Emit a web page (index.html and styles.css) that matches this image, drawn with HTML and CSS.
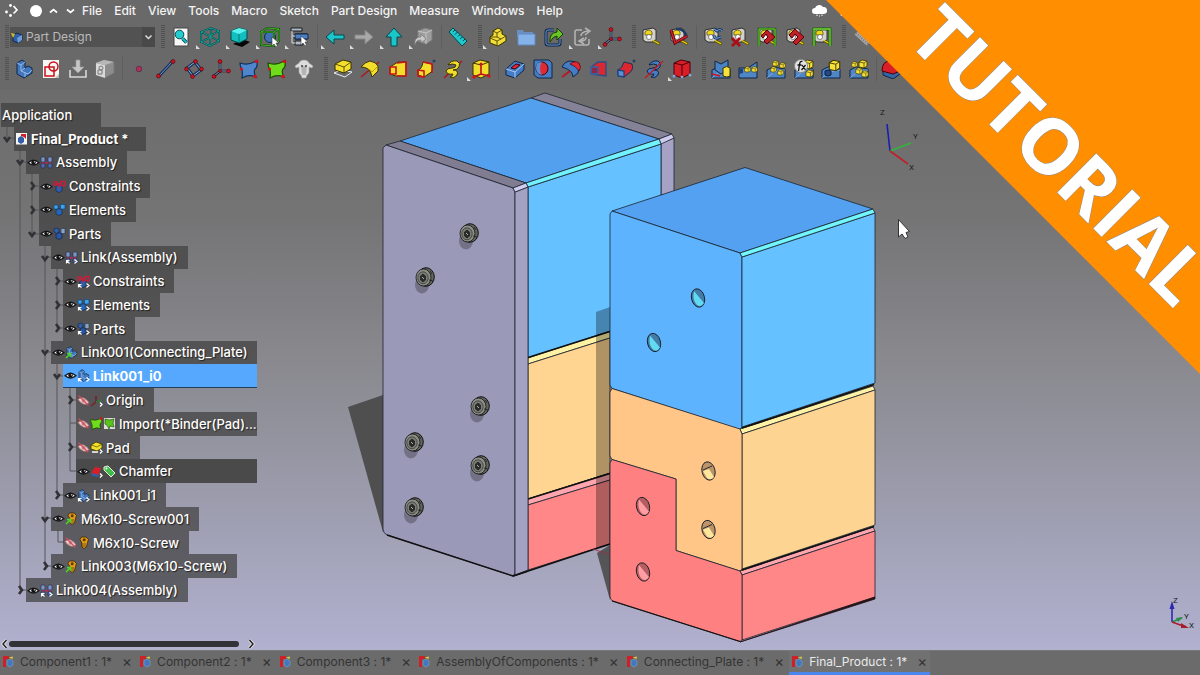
FILE: index.html
```html
<!DOCTYPE html>
<html lang="en">
<head>
<meta charset="utf-8">
<meta name="viewport" content="width=device-width, initial-scale=1">
<title>Final_Product</title>
<link rel="stylesheet" href="styles.css">
</head>
<body>
<svg class="defs" width="0" height="0" aria-hidden="true">
  <defs>
    <symbol id="eye" viewBox="0 0 12 12"><path d="M1 6.300Q6 1.500 11 6.300Q6 10.500 1 6.300z" fill="#fff" stroke="#16161a" stroke-width="1.200"/><circle cx="6" cy="6.100" r="2.100" fill="#111"/><circle cx="6.800" cy="5.400" r=".6" fill="#fff"/></symbol>
    <symbol id="eye-off" viewBox="0 0 12 12"><path d="M1 5Q6 1 11 8Q6 12 1 5z" fill="#f1d3d3" stroke="#b77" stroke-width=".8"/><circle cx="6" cy="6.300" r="1.800" fill="#b88"/><path d="M1.500 1.500l9 9" stroke="#d9485a" stroke-width="1.300"/></symbol>
    <symbol id="link" viewBox="0 0 13 13"><path d="M1.500 12.500v-3h3M1.500 9.500l3 3M9.500 8.500l2.500 2-2.500 2" fill="none" stroke="#fff" stroke-width="1.200"/></symbol>
    <symbol id="asm" viewBox="0 0 13 13"><g stroke="#1b2746" stroke-width=".6"><rect x="1" y="1" width="4" height="5" rx="1" fill="#7d92c8"/><rect x="8" y="1" width="4" height="5" rx="1" fill="#7d92c8"/><rect x="1" y="7.500" width="4" height="4.500" rx="1" fill="#4c69ab"/><rect x="8" y="7.500" width="4" height="4.500" rx="1" fill="#4c69ab"/></g><path d="M5 6.700h3M3 6v2M10 6v2" stroke="#b3265c" stroke-width="1.400"/></symbol>
    <symbol id="cons" viewBox="0 0 13 13"><path d="M3 6l3-1 3 1v5l-3 1.500-3-1.500z" fill="#2f5da8" stroke="#152a55" stroke-width=".7"/><path d="M1 2h3v3H1zM8 1.500h4v4H8zM4 3.500h4M6 3.500v4" fill="none" stroke="#c2203d" stroke-width="1.500"/></symbol>
    <symbol id="elem" viewBox="0 0 13 13"><path d="M1 2h4v4H1zM7.500 1.500H12V6H7.500z" fill="#3da2ee" stroke="#13467d" stroke-width=".7"/><path d="M3 7l3-1.500L9 7v4l-3 1.500L3 11z" fill="#2666b4" stroke="#12305c" stroke-width=".7"/></symbol>
    <symbol id="parts" viewBox="0 0 13 13"><path d="M1 2l2.500-1L6 2v3L3.500 6.500 1 5z" fill="#315fa8" stroke="#14284f" stroke-width=".7"/><path d="M8 1.500h4v5H8z" fill="#89a4c2" stroke="#2c405c" stroke-width=".7"/><path d="M3 7l3-1.500L9 7v4l-3 1.500L3 11z" fill="#2a55a0" stroke="#12244c" stroke-width=".7"/></symbol>
    <symbol id="body" viewBox="0 0 20 20"><path d="M3 4l5-3 3 2v6l3-2 4 2v5l-8 5-7-4z" fill="#4277bc" stroke="#0f2648"/><path d="M3 4l4 2 4-3M7 6v6l7 3 4-4M7 12l4-3M11 18v-4" fill="none" stroke="#9dc1ec" stroke-width=".9"/></symbol>
    <symbol id="screw" viewBox="0 0 13 13"><path d="M4.500 1h4.500l2.500 2.500-1 3L9.500 11 7 12.500 5 11l-.5-5L3 3.500z" fill="#e09a1c" stroke="#3d2700" stroke-width=".8"/><circle cx="7.200" cy="3.700" r="1.500" fill="#5b3b00"/><path d="M5 8h4M5 10h4" stroke="#6a4600" stroke-width=".8"/></symbol>
    <symbol id="green-arrow" viewBox="0 0 13 13"><path d="M1 12l4-4M2 7.500H5.500V11" fill="none" stroke="#4fd52a" stroke-width="1.600"/></symbol>
    <symbol id="appico" viewBox="0 0 13 13"><path d="M1 1h6v3H4v8H1z" fill="#cf2027"/><path d="M5 6l3-2 3 2v4l-3 2-3-2z" fill="#4277bd" stroke="#7fa2cf" stroke-width=".6"/><path d="M7 2.500l4-1-.5 2.500z" fill="#d8d436"/></symbol>
    <symbol id="tape" viewBox="0 0 20 20"><path d="M2 3l10-2 3 2v10l-3 2H5l-3-2z" fill="#d2d2ca" stroke="#2e2e2e"/><path d="M4 5q4-4 7 0v3H4z" fill="#efd71c" stroke="#4a4200" stroke-width=".7"/><circle cx="8" cy="10" r="2.500" fill="#fff" stroke="#555" stroke-width=".7"/><path d="M11 14l7 4 1-2-6-3" fill="#e6ce10" stroke="#514800" stroke-width=".8"/></symbol>
    <symbol id="boxes" viewBox="0 0 20 20"><path d="M1 11l6-3 12 2v9H1z" fill="#4f86c6" stroke="#0f2547"/><path d="M1 19l7-6 11-2" fill="none" stroke="#86b1e6" stroke-width=".8"/></symbol>
    <symbol id="cube" viewBox="0 0 10 10"><path d="M1 3l3-2 5 1v5L6 9 1 8z" fill="#f6e23a" stroke="#3b3400" stroke-width=".8"/><path d="M1 3l5 1 3-2M6 4v5" fill="none" stroke="#3b3400" stroke-width=".7"/></symbol>
    <symbol id="axes" viewBox="0 0 20 20"><path d="M9 12V3M9 12h8M9 12l-6 5" stroke="#111c33" stroke-width="2.400"/><path d="M9 12V3M9 12h8M9 12l-6 5" stroke="#9dadc3" stroke-width=".9"/><g fill="#d3121d" stroke="#46000a" stroke-width=".6"><circle cx="9" cy="2.500" r="1.900"/><circle cx="17.500" cy="12" r="1.900"/><circle cx="3" cy="17.500" r="1.900"/><circle cx="9" cy="12" r="1.500"/></g></symbol>
    <symbol id="surface" viewBox="0 0 20 20"><path d="M1 4Q9 7 18 1.500Q19 8 16 10Q14 13 17 18Q10 15 3 19Q4 13 2.500 10Q1 7 1 4z" stroke-width="1.200"/></symbol>
    <symbol id="screwhead" viewBox="0 0 24 32"><ellipse cx="9" cy="20" rx="7" ry="8.500" fill="#737186"/><ellipse cx="13" cy="12" rx="8.300" ry="9.300" fill="#62645e" stroke="#111"/><ellipse cx="10.500" cy="12.500" rx="7.500" ry="8.500" fill="#8d8f87" stroke="#111" stroke-width=".8"/><ellipse cx="10" cy="12.800" rx="5.200" ry="6" fill="#7b7e76" stroke="#2c2c2c" stroke-width=".7"/><path d="M7.500 11l2.500-2 2.500 2v4L10 17l-2.500-2z" fill="#2a2c2b" stroke="#111" stroke-width=".6"/><path d="M9 12l2 2" stroke="#adb0a7"/><path d="M16 15l4 1M17 6l2 3" stroke="#111" stroke-width=".7"/></symbol>
  </defs>
</svg>

<div class="app">
  <header class="chrome">
    <nav class="menubar" aria-label="Main menu">
      <svg class="menu-glyphs" viewBox="0 0 82 22" aria-hidden="true"><g fill="#fff"><circle cx="6.500" cy="12" r="1.400"/><circle cx="10.500" cy="15.500" r="1.400"/><circle cx="10.500" cy="5.500" r="1.400"/><circle cx="36" cy="11" r="6"/></g><path d="M13.500 6l3.500 4-3.500 3.500M50 12.500l3.500-3 3.500 3M67 9.500l3.500 3 3.500-3" fill="none" stroke="#fff" stroke-width="1.700"/></svg>
      <button>File</button><button>Edit</button><button>View</button><button>Tools</button><button>Macro</button><button>Sketch</button><button>Part Design</button><button>Measure</button><button>Windows</button><button>Help</button>
      <svg class="cloud" viewBox="0 0 36 22" aria-hidden="true"><path d="M4 14a3 3 0 0 1 0-6 4.500 4.500 0 0 1 8-1 3.500 3.500 0 0 1 1 7z" fill="#fff"/><path d="M6 14.500v1.500M8.500 15.500v1M11 14.500v1.500" stroke="#fff"/><path d="M29 13l3-1 3 4h-5z" fill="#fff"/></svg>
    </nav>

    <div class="toolbar" role="toolbar" aria-label="Views">
      <span class="handle"></span>
      <div class="workbench">
        <svg viewBox="0 0 13 13" aria-hidden="true"><path d="M3 4l4-2 5 2v5l-4 3-5-2z" fill="#315fa8" stroke="#132848"/><path d="M7 7l5-3v5l-4 3z" fill="#6f9fd8"/><path d="M1 2l4 1-2 4z" fill="#d0bf2b"/></svg>
        <select aria-label="Workbench"><option>Part Design</option></select>
        <svg class="caret" viewBox="0 0 13 20" aria-hidden="true"><path d="M3.500 8.500l3 3 3-3" fill="none" stroke="#ddd" stroke-width="1.500"/></svg>
      </div>
      <span class="handle gap"></span>
      <div class="group w148">
        <button aria-label="Fit all"><svg viewBox="0 0 20 20"><path d="M3 1h14v18H3z" fill="#f7f7f7" stroke="#444"/><path d="M11.500 11.500l4 4" stroke="#053f46" stroke-width="3.500"/><path d="M11.500 11.500l4 4" stroke="#14bfc4" stroke-width="2"/><circle cx="8.500" cy="7.500" r="4.300" fill="#23cdd0" stroke="#05494f"/></svg></button>
        <button class="more" aria-label="Isometric view"><svg viewBox="0 0 20 20" fill="none" stroke="#053c3e" stroke-width="1.800"><path d="M1 5l10-4 8 3v10l-9 5-9-4zM1 5l9 4 9-5M10 9v10M1 15l10-5 8 4M11 1v9"/><path d="M1 5l10-4 8 3v10l-9 5-9-4zM1 5l9 4 9-5M10 9v10M1 15l10-5 8 4M11 1v9" stroke="#16b7ad" stroke-width=".8"/></svg></button>
        <button class="more" aria-label="Draw style"><svg viewBox="0 0 20 20"><path d="M3 17l9-5 8 3-8 5z" fill="#050505"/><path d="M1 4l8-3 8 2v9l-8 4-8-3z" fill="#12bfc0" stroke="#04484a"/><path d="M1 4l8 3 8-4-8-2z" fill="#58f2ee"/><path d="M9 7v9" stroke="#087b7d"/></svg></button>
        <button class="more" aria-label="Bounding box"><svg viewBox="0 0 20 20"><circle cx="10" cy="10" r="5.500" fill="#3f70b4" stroke="#0e2a52"/><path d="M1 5l6-4 12 1v12l-5 5-13-1zM1 5h13l5-3M14 5v14" fill="none" stroke="#0b4b08" stroke-width="2"/><path d="M1 5l6-4 12 1v12l-5 5-13-1zM1 5h13l5-3M14 5v14" fill="none" stroke="#4fc92e" stroke-width=".8"/><path d="M12 10v9l2-2 2 3 1.500-1-1.500-3h3z" fill="#fff" stroke="#333" stroke-width=".6"/></svg></button>
        <button class="more" aria-label="Selection"><svg viewBox="0 0 20 20"><path d="M2 1h11v3H2zM6 7h12v5H6zM6 14h8v4H6z" fill="#aebacb" stroke="#111" stroke-width=".9"/><path d="M6 7h13v5H6z" fill="#4a80c4" stroke="#10264a"/><path d="M3 4v12h3M3 9h3" fill="none" stroke="#ddd"/><path d="M12 9v9l2-2 2 3 1.500-1-1.500-3h3z" fill="#fff" stroke="#333" stroke-width=".6"/></svg></button>
      </div>
      <span class="divider"></span>
      <div class="group w118">
        <button class="more" aria-label="Back"><svg viewBox="0 0 20 20"><path d="M1 10l8-7v5h10v4H9v5z" fill="#1bc6cb" stroke="#04484c"/></svg></button>
        <button class="more" aria-label="Forward"><svg viewBox="0 0 20 20"><path d="M19 10l-8-7v5H1v4h10v5z" fill="#a8a8a8" stroke="#858585"/></svg></button>
        <button class="more" aria-label="Up"><svg viewBox="0 0 20 20"><path d="M10 1l8 9h-5v9H7v-9H2z" fill="#1bc6cb" stroke="#04484c"/></svg></button>
        <button class="more" aria-label="Link actions"><svg viewBox="0 0 20 20"><path d="M5 4l7-3 7 2v10l-6 4-8-3z" fill="#9e9e9e" stroke="#7d7d7d"/><path d="M5 4l8 2 6-3M13 6v11" fill="none" stroke="#c4c4c4"/><path d="M2 18c-1-6 2-8 6-8V7l5 5-5 4v-3c-3 0-5 1-6 5z" fill="#c9c9c9" stroke="#777" stroke-width=".7"/></svg></button>
      </div>
      <span class="divider"></span>
      <div class="group w28">
        <button aria-label="Measure"><svg viewBox="0 0 20 20"><path d="M5 1l14 13-5 5L1 5z" fill="#1dc7cc" stroke="#04484c"/><path d="M7 3L5 5M9.500 5L7 7.500M12 7.500L10 9.500M14.500 10L12 12M17 12l-2 2" stroke="#04484c"/></svg></button>
      </div>
      <span class="handle gap"></span>
      <div class="group w143">
        <button class="more" aria-label="Create part"><svg viewBox="0 0 20 20"><path d="M3 10l3-2V4l5-3 4 2v4l4 2v5l-8 5-8-3z" fill="#f1dc38" stroke="#3b3400"/><path d="M6 4l4 2 5-3M10 6v4l-7 0M10 10l4 2 5-3M3 11l7 3 4-2M10 14v4" fill="none" stroke="#3b3400" stroke-width=".8"/></svg></button>
        <button aria-label="Create group"><svg viewBox="0 0 20 20"><path d="M1 3h6l1 2h9v5H1z" fill="#6b8fc0"/><path d="M2 7h17v11H2z" fill="#86b2ea" stroke="#5f89c0"/></svg></button>
        <button aria-label="Make link"><svg viewBox="0 0 20 20"><path d="M10 3H4q-2 0-2 2v11q0 2 2 2h10q2 0 2-2v-4" fill="none" stroke="#0d2446" stroke-width="3"/><path d="M10 3H4q-2 0-2 2v11q0 2 2 2h10q2 0 2-2v-4" fill="none" stroke="#6c9cd6"/><path d="M6 15q-1-9 7-10V1l6 6-6 6V9q-4 0-7 6z" fill="#68c724" stroke="#173d00"/></svg></button>
        <button class="more" aria-label="Replace link"><svg viewBox="0 0 20 20" fill="none" stroke="#b5b5b5" stroke-width="1.500"><path d="M9 3H4q-2 0-2 2v11q0 2 2 2h10q2 0 2-2v-4"/><path d="M8 9q0-4 7-5M12 1l5 3-5 4M13 10q0 4-5 4M11 11l-5 3 5 3"/></svg></button>
        <button class="more" aria-label="Axis origin"><svg><use href="#axes"/></svg></button>
      </div>
      <span class="handle gap"></span>
      <div class="group w56">
        <button aria-label="Linear measure"><svg><use href="#tape"/></svg></button>
        <button aria-label="Angular measure"><svg viewBox="0 0 20 20"><use href="#tape"/><path d="M7 2q8-1 11 8" fill="none" stroke="#1d3c66" stroke-width="2.500"/><path d="M2 3l4 13 12-7" fill="none" stroke="#5a0008" stroke-width="3"/><path d="M2 3l4 13 12-7" fill="none" stroke="#d4202a" stroke-width="1.500"/></svg></button>
      </div>
      <span class="divider"></span>
      <div class="group w137">
        <button aria-label="Refresh measures"><svg viewBox="0 0 20 20"><use href="#tape"/><path d="M11 2l3 2q3-3 5 0M18 10l-3 1q-4 1-4-3" fill="none" stroke="#17345f" stroke-width="3"/><path d="M11 2l3 2q3-3 5 0M18 10l-3 1q-4 1-4-3" fill="none" stroke="#719bd3" stroke-width="1.200"/></svg></button>
        <button aria-label="Clear measures"><svg viewBox="0 0 20 20"><use href="#tape"/><path d="M2 11l8 8M10 11l-8 8" stroke="#ab0c17" stroke-width="2.600"/></svg></button>
        <button aria-label="Toggle all"><svg viewBox="0 0 20 20"><use href="#tape"/><path d="M2 19V2h16v17" fill="none" stroke="#23630b" stroke-width="2.600"/><path d="M2 19V2h16v17" fill="none" stroke="#70d33a"/><path d="M4 9l6-6 8 7-8 7-3-3 4-4-2-3-3 4z" fill="#bd2029" stroke="#5c0008"/></svg></button>
        <button aria-label="Toggle 3D"><svg viewBox="0 0 20 20"><use href="#tape"/><path d="M4 8l6-6 9 8-8 8-3-3 5-5-3-3-3 4z" fill="#bd2029" stroke="#5c0008"/></svg></button>
        <button aria-label="Toggle delta"><svg viewBox="0 0 20 20"><use href="#tape"/><path d="M2 19V2h16v17" fill="none" stroke="#23630b" stroke-width="3"/><path d="M2 19V2h16v17" fill="none" stroke="#70d33a" stroke-width="1.300"/></svg></button>
      </div>
      <span class="handle gap"></span>
      <div class="group w28"><button aria-label="Caliper"><svg viewBox="0 0 20 20"><path d="M5 6l12 11" stroke="#aaa" stroke-width="4"/><path d="M5 6l12 11" stroke="#777" stroke-dasharray="1 1.500" stroke-width="2"/></svg></button></div>
    </div>

    <div class="toolbar tall" role="toolbar" aria-label="Part Design">
      <span class="handle"></span>
      <div class="group w109">
        <button aria-label="Body"><svg><use href="#body"/></svg></button>
        <button aria-label="Sketch"><svg viewBox="0 0 20 20"><path d="M2 1h16v18H2z" fill="#f7f7f5"/><path d="M4 8h9v9H4z" fill="none" stroke="#cb1019" stroke-width="1.500"/><circle cx="12.500" cy="7.500" r="4.500" fill="none" stroke="#cb1019" stroke-width="1.500"/><path d="M14 19l4-4v4z" fill="#bbb"/></svg></button>
        <button aria-label="Attach sketch"><svg viewBox="0 0 20 20"><path d="M2 11v7h16v-7" fill="none" stroke="#d8d8d8" stroke-width="1.600"/><path d="M8 1h4v7h4l-6 6-6-6h4z" fill="#c6c6c6" stroke="#999" stroke-width=".7"/></svg></button>
        <button aria-label="Validate sketch"><svg viewBox="0 0 20 20"><path d="M1 4l8-3 10 2v11l-9 5-9-3z" fill="#8d8d8d" stroke="#777"/><path d="M1 4l9 2v13l-9-3z" fill="#d9d9d9"/><path d="M1 4l8-3 10 2-9 3z" fill="#b8b8b8"/><circle cx="6" cy="9" r="2" fill="none" stroke="#777"/><path d="M3 11h4v4H3z" fill="none" stroke="#777"/></svg></button>
      </div>
      <span class="divider"></span>
      <div class="group w193">
        <button aria-label="Point"><svg viewBox="0 0 20 20"><circle cx="10" cy="10" r="2.800" fill="#b52b54" stroke="#5c3550"/></svg></button>
        <button aria-label="Line"><svg viewBox="0 0 20 20"><path d="M3 17L17 2" stroke="#142d57" stroke-width="3"/><path d="M3 17L17 2" stroke="#6f9bd4"/><g fill="#d3121d" stroke="#46000a" stroke-width=".6"><circle cx="2.500" cy="17" r="2"/><circle cx="17" cy="2.500" r="2"/></g></svg></button>
        <button aria-label="Plane"><svg viewBox="0 0 20 20"><path d="M11 3l6 8-8 6-6-8z" fill="none" stroke="#142d57" stroke-width="3"/><path d="M11 3l6 8-8 6-6-8z" fill="none" stroke="#8fb0da"/><g fill="#d3121d" stroke="#46000a" stroke-width=".6"><circle cx="11.500" cy="2.500" r="1.900"/><circle cx="17.500" cy="10" r="1.900"/><circle cx="8.500" cy="17.500" r="1.900"/><circle cx="2.500" cy="10" r="1.900"/></g></svg></button>
        <button aria-label="Coordinate system"><svg><use href="#axes"/></svg></button>
        <button aria-label="Shape binder"><svg viewBox="0 0 20 20"><use href="#surface" fill="#4d86cd" stroke="#112f5c"/><g fill="#d3121d"><circle cx="17.500" cy="2.500" r="1.800"/><circle cx="16" cy="17.500" r="1.800"/><circle cx="2.500" cy="10" r="1.600"/></g></svg></button>
        <button aria-label="Sub-shape binder"><svg viewBox="0 0 20 20"><use href="#surface" fill="#6fdc1c" stroke="#1c4d00"/><g fill="#d3121d"><circle cx="17.500" cy="2.500" r="1.800"/><circle cx="16" cy="17.500" r="1.800"/><circle cx="2.500" cy="10" r="1.600"/></g></svg></button>
        <button aria-label="Clone"><svg viewBox="0 0 20 20"><path d="M5 4q1-3 5-3t5 3l4 3-1 2-3-1v5q0 2-2 3l-1 3H8l-1-3q-2-1-2-3V8L2 9 1 7z" fill="#dcdcdc" stroke="#a5a5a5" stroke-width=".6"/><path d="M7 7h6l-1 9H8z" fill="#b4b4b4"/><circle cx="8" cy="7" r="1" fill="#444"/><circle cx="12" cy="7" r="1" fill="#444"/></svg></button>
      </div>
      <span class="handle gap"></span>
      <div class="group w166">
        <button aria-label="Pad"><svg viewBox="0 0 20 20"><path d="M1 14l7-3 11 2-7 5z" fill="none" stroke="#e8eef4"/><path d="M2 5l8-4 8 2v7l-7 4-9-3z" fill="#f2de2b" stroke="#3b3400"/><path d="M2 5l9 3 7-5M11 8v6" fill="none" stroke="#3b3400" stroke-width=".8"/></svg></button>
        <button aria-label="Revolution"><svg viewBox="0 0 20 20"><path d="M1 18L19 3" stroke="#ab1620" stroke-width="1.500"/><path d="M1 8q4-5 9-6 6 1 8 5v5l-6 6q-1-6-4-8-3-2-7-2z" fill="#f2de2b" stroke="#3b3400"/><path d="M8 10q2 0 4 3l6-6" fill="none" stroke="#a29400" stroke-width=".8"/></svg></button>
        <button aria-label="Loft"><svg viewBox="0 0 20 20"><path d="M2 8l8-5 8 0v14l-10 0-6-2z" fill="#f2de2b" stroke="#3b3400"/><path d="M9 4l9-1v14H9M2 8h6v7H2z" fill="none" stroke="#c9141f" stroke-width="1.600"/></svg></button>
        <button aria-label="Pipe"><svg viewBox="0 0 20 20"><path d="M2 11q4-1 5-8l9 2q2 6-2 9l-6 4-6-2z" fill="#f2de2b" stroke="#3b3400"/><path d="M7 3l9 2v9M2 11l6 1v6l-6-1z" fill="none" stroke="#c9141f" stroke-width="1.600"/><circle cx="18" cy="2" r="1.500" fill="#27405f"/></svg></button>
        <button aria-label="Helix"><svg viewBox="0 0 20 20"><path d="M1 19L19 2" stroke="#ab1620" stroke-width="1.600"/><path d="M5 6q3-5 9-4 4 2 2 6-2 3-6 3 6 0 4 5-3 4-7 2 3-1 3-3-6 1-7-3 1-3 6-3 4 0 4-3-3-2-8 0z" fill="#f2de2b" stroke="#3b3400"/></svg></button>
        <button class="more" aria-label="Additive primitive"><svg viewBox="0 0 20 20"><path d="M2 4l7-3 9 2v12l-8 4-8-3z" fill="#f2de2b" stroke="#3b3400"/><path d="M2 4l8 2 8-3" fill="none" stroke="#3b3400"/><path d="M10 6v9M10 15l8 2M10 15l-7 3" stroke="#b8121b" stroke-width="1.600"/><g fill="#d3121d"><circle cx="10" cy="5" r="1.500"/><circle cx="18" cy="17" r="1.700"/><circle cx="3" cy="18" r="1.700"/></g></svg></button>
      </div>
      <span class="divider"></span>
      <div class="group w195">
        <button aria-label="Pocket"><svg viewBox="0 0 20 20"><path d="M1 10l9-8 9 3v6l-9 8-9-3z" fill="#457dc4" stroke="#0f2648"/><path d="M1 10l9 3 9-8M10 13v6" fill="none" stroke="#a8c8ef"/><path d="M6 9l5-4 4 1-5 4z" fill="#e02932" stroke="#45000a"/></svg></button>
        <button aria-label="Hole"><svg viewBox="0 0 20 20"><path d="M1 1h15l3 3v15H5l-4-3z" fill="#457dc4" stroke="#0f2648"/><ellipse cx="9" cy="9.500" rx="6" ry="6.500" fill="#e02932" stroke="#45000a"/><path d="M9 3q-4 6 0 13-6-1-6-7t6-6z" fill="#5c8fd2"/></svg></button>
        <button aria-label="Groove"><svg viewBox="0 0 20 20"><path d="M1 8q3-6 9-6 7 1 8 5l-1 7-5 4q0-7-11-10z" fill="#457dc4" stroke="#0f2648"/><path d="M9 5q4-4 9-1 3 5 0 8-3-5-9-7z" fill="#e02932" stroke="#45000a" stroke-width=".7"/><path d="M1 18l8-6" stroke="#b8182a" stroke-width="2"/></svg></button>
        <button aria-label="Subtractive loft"><svg viewBox="0 0 20 20"><path d="M3 8l7-5 8 0v14l-8-1-7-1z" fill="#dc2630" stroke="#2b4f85" stroke-width="1.400"/><path d="M3 8h7v7H3z" fill="#8e2847" stroke="#3465a4" stroke-width="1.500"/></svg></button>
        <button aria-label="Subtractive pipe"><svg viewBox="0 0 20 20"><path d="M2 11q4-1 6-8l8 2q2 6-3 9l-5 4-6-2z" fill="#dc2630" stroke="#202f57"/><path d="M2 11l6 1v6l-6-1z" fill="#5c90d3" stroke="#1d427d" stroke-width="1.300"/><circle cx="18" cy="2" r="1.500" fill="#27405f"/></svg></button>
        <button aria-label="Subtractive helix"><svg viewBox="0 0 20 20"><path d="M5 6q3-5 9-4 4 2 2 6-2 3-6 3 6 0 4 5-3 4-7 2 3-1 3-3-6 1-7-3 1-3 6-3 4 0 4-3-3-2-8 0z" fill="#457dc4" stroke="#0f2648"/><path d="M1 19L19 2" stroke="#c21c27" stroke-width="1.500"/></svg></button>
        <button class="more" aria-label="Subtractive primitive"><svg viewBox="0 0 20 20"><path d="M2 4l7-3 9 2v12l-8 4-8-3z" fill="#d81f28" stroke="#4b0009"/><path d="M2 4l8 2 8-3M10 6v12" fill="none" stroke="#4b0009"/><g fill="#84a9d4"><circle cx="2" cy="17" r="1.500"/><circle cx="18" cy="16" r="1.500"/><circle cx="10" cy="18" r="1.500"/></g></svg></button>
      </div>
      <span class="handle gap"></span>
      <div class="group w166">
        <button aria-label="Mirrored"><svg viewBox="0 0 20 20"><use href="#boxes"/><path d="M4 2l6 3 7-4v9l-7 5-6-4z" fill="#4a82c6" stroke="#0f2547"/><path d="M12 9q4-3 7 0v8q-3 2-7 0z" fill="#f6e23a" stroke="#3b3400"/><path d="M1 15l8 2" stroke="#c9141f" stroke-width="1.500"/></svg></button>
        <button aria-label="Linear pattern"><svg viewBox="0 0 20 20"><path d="M1 9l9 0 9-6v16H1z" fill="#4f86c6" stroke="#0f2547"/><use href="#cube" x="6" y="7" width="7" height="7"/><use href="#cube" x="13" y="7" width="7" height="7"/><path d="M1 10v5l4-1v-4z" fill="#214376"/></svg></button>
        <button aria-label="Polar pattern"><svg viewBox="0 0 20 20"><use href="#boxes"/><use href="#cube" x="6" y="1" width="7" height="7"/><use href="#cube" x="13" y="3" width="7" height="7"/><use href="#cube" x="4" y="7" width="7" height="7"/><use href="#cube" x="11" y="10" width="7" height="7"/></svg></button>
        <button aria-label="Multi transform"><svg viewBox="0 0 20 20"><use href="#boxes"/><use href="#cube" x="9" y="0" width="11" height="11"/><use href="#cube" x="11" y="10" width="9" height="9"/><circle cx="7" cy="7" r="6.500" fill="#e4e4e4" stroke="#888"/><path d="M8.500 2.500q-2.500-1-3 3L4.500 12M3.500 6h4M8 6l3.500 5M11.500 6L7.500 11" fill="none" stroke="#111" stroke-width="1.300"/></svg></button>
        <button aria-label="Scaled"><svg viewBox="0 0 20 20"><use href="#boxes"/><use href="#cube" x="7" y="0" width="13" height="13"/><path d="M4 12l3-1 3 1v4l-3 1-3-1z" fill="#244a86" stroke="#0c1f40"/></svg></button>
        <button aria-label="Transform set"><svg viewBox="0 0 20 20"><use href="#boxes"/><use href="#cube" x="8" y="0" width="12" height="10"/><use href="#cube" x="2" y="2" width="7" height="7"/><use href="#cube" x="12" y="11" width="8" height="8"/><use href="#cube" x="6" y="8" width="8" height="8"/></svg></button>
      </div>
      <span class="divider"></span>
      <div class="group w24"><button aria-label="Fillet"><svg viewBox="0 0 20 20"><path d="M2 12v4l10 4 7-5v-4z" fill="#3465a4" stroke="#0f2547"/><path d="M1 12q0-10 8-10 8 1 10 10l-7 3z" fill="#d81f28" stroke="#4b0009"/></svg></button></div>
    </div>
  </header>

  <main class="viewport">
    <svg class="scene" viewBox="0 90 1200 560" role="img" aria-label="Assembled product in the 3D view">
      <g stroke="#1c2530" stroke-width=".8" stroke-linejoin="round">
        <path d="M348 407L383 395V532z" fill="#4f4f50" stroke="none"/>
        <path d="M597 553L610 545V600z" fill="#555558" stroke="none"/>
        <path d="M661 143L674 138V195H661z" fill="#a5a2c6"/>
        <path d="M531 98L545 93 672 134 659 139z" fill="#858298"/>
        <path d="M659 139L672 134 674 138 661 144z" fill="#cfcbee"/>
        <path d="M400 141L531 98 659 139 526 183z" fill="#53a0ee"/>
        <path d="M528 187L661 144V330L528 358z" fill="#65c1ff"/>
        <path d="M526 183L659 139 661 144 528 187z" fill="#72f2ff"/>
        <path d="M528 358L610 331V338L528 364z" fill="#fff2a4"/>
        <path d="M528 364L610 338V473L528 499z" fill="#ffd591"/>
        <path d="M528 499L610 473V480L528 505z" fill="#ffa5ae"/>
        <path d="M528 505L610 480V544L528 570z" fill="#ff8788"/>
        <path d="M528 357.500L610 331.500M528 499L610 473.500M513 576L610 544" fill="none" stroke="#101010" stroke-width="1.600"/>
        <path d="M593 549L610 555" stroke="#a12b43"/>
        <path d="M596 312L610 307V545L596 549z" fill="#000" fill-opacity=".31" stroke="none"/>
        <path d="M386 145L400 141 526 183 513 188z" fill="#807d93"/>
        <path d="M383 148L386 145 513 188 515 192V573L513 576 387 535Q383 533 383 529z" fill="#9a99b8"/>
        <path d="M515 192L528 187V570L515 575z" fill="#a4a2c3"/>
        <path d="M513 188L526 183 528 187 515 192z" fill="#d0ccf0"/>
        <path d="M387 535L513 576 528 571" fill="none" stroke="#111" stroke-width="1.400"/>

        <path d="M612 211L745 167.500 873 209 740 253z" fill="#53a1f0"/>
        <path d="M610 214L612 211 740 253 742 257V427L740 429.500 612 388.500 610 385z" fill="#5eb3ff"/>
        <path d="M742 257L875 213V383L742 427z" fill="#65c1ff"/>
        <path d="M740 253L873 209 875 213 742 257z" fill="#72f7ff"/>
        <path d="M740 429L873 386 875 390 742 434z" fill="#fff2a4"/>
        <path d="M742 434L875 390V525L742 569z" fill="#fdd491"/>
        <path d="M740 571L873 527 875 531 742 575z" fill="#ffa5ae"/>
        <path d="M742 575L875 531V597L742 640z" fill="#ff8788"/>
        <path d="M612 388.500L740 429 742 434V569L740 571 676 550.500V479L612 459.500 610 456V392z" fill="#ffc688"/>
        <path d="M612 459.500L676 479V550.500L740 571 742 575V640L740 641.500 613 601Q610 600 610 596V463z" fill="#ff8080"/>
        <path d="M742 428L874 384.500M742 570L874 526.500" stroke="#101010" stroke-width="1.800"/>
        <path d="M612 601L740 641.500" fill="none" stroke="#161010" stroke-width="1.200"/>
        <path d="M740 642L875 597V599z" fill="#241215" stroke="#241215"/>
      </g>
      <g stroke="#18212a" stroke-width=".9">
        <g fill="#427da9"><ellipse cx="698" cy="298" rx="6.500" ry="9.300" transform="rotate(-14 698 298)"/><ellipse cx="654" cy="342.500" rx="6.500" ry="9.300" transform="rotate(-14 654 342.500)"/></g>
        <path d="M694 291L704 303Q701 308 697 305 692 300 694 291zM650 335.500L660 347.500Q657 352.500 653 349.500 648 344.500 650 335.500z" fill="#62daf2" stroke="none"/>
        <g fill="#bd936a"><ellipse cx="708.500" cy="471" rx="6.500" ry="9.300" transform="rotate(-14 708.500 471)"/><ellipse cx="708.500" cy="529.500" rx="6.500" ry="9.300" transform="rotate(-14 708.500 529.500)"/></g>
        <path d="M703 471L709 469 714 477Q711 481 707 478zM703 529.500L709 527.500 714 535.500Q711 539.500 707 536.500z" fill="#ffe79b" stroke="none"/>
        <path d="M703 470l9-4M703 528.500l9-4"/>
        <g fill="#b65d61"><ellipse cx="643" cy="506.500" rx="6.500" ry="9.300" transform="rotate(-14 643 506.500)"/><ellipse cx="643" cy="572" rx="6.500" ry="9.300" transform="rotate(-14 643 572)"/></g>
        <path d="M639 499.500L649 511.500Q646 516.500 642 513.500 637 508.500 639 499.500zM639 565L649 577Q646 582 642 579 637 574 639 565z" fill="#ff9da2" stroke="none"/>
      </g>
      <g>
        <use href="#screwhead" x="457" y="221" width="24" height="32"/>
        <use href="#screwhead" x="413" y="265" width="24" height="32"/>
        <use href="#screwhead" x="468" y="394" width="24" height="32"/>
        <use href="#screwhead" x="402" y="430" width="24" height="32"/>
        <use href="#screwhead" x="468" y="453" width="24" height="32"/>
        <use href="#screwhead" x="402" y="495" width="24" height="32"/>
      </g>
      <g stroke-width="1.600">
        <path d="M890 151L887 124" stroke="#1c1cb4"/><path d="M890 151L911 143" stroke="#31b53a"/><path d="M890 151L908 164" stroke="#c02026"/>
        <path d="M1172 622V604" stroke="#2a2ab0"/><path d="M1169.500 609L1172 601 1174.500 609z" fill="#2a2ab0"/><path d="M1172 622L1182 618" stroke="#2b8b4b"/><path d="M1176 618L1183 617 1178 622z" fill="#2b8b4b"/><path d="M1172 622L1186 627" stroke="#a81c2a"/><path d="M1181 623L1189 628 1181 628z" fill="#a81c2a"/>
      </g>
      <g class="axis"><text x="880" y="115">Z</text><text x="913" y="139">Y</text><text x="909" y="170">X</text><text x="1173" y="603">Z</text><text x="1184" y="619">Y</text><text x="1189" y="628">X</text></g>
      <path d="M898.500 219.500V237L902 234 905 238.500 908 237 906 232.500 909.500 231.500z" fill="#fff" stroke="#333"/>
    </svg>

    <aside class="panel">
      <ul class="tree" role="tree" aria-label="Model tree">
        <li class="row l0">Application</li>
        <li class="row l1 doc"><svg viewBox="0 0 13 13"><path d="M1 1h11v11.500H1z" fill="#f4f4f4"/><path d="M3 6l3-2 3 2v4l-3 2-3-2z" fill="#315fa8"/><path d="M6 2h5v5L9 5 6 4z" fill="#d01e27"/></svg><span>Final_Product *</span></li>
        <li class="row l2"><svg><use href="#eye"/></svg><svg><use href="#asm"/></svg><span>Assembly</span></li>
        <li class="row l3"><svg><use href="#eye"/></svg><svg><use href="#cons"/></svg><span>Constraints</span></li>
        <li class="row l3"><svg><use href="#eye"/></svg><svg><use href="#elem"/></svg><span>Elements</span></li>
        <li class="row l3"><svg><use href="#eye"/></svg><svg><use href="#parts"/></svg><span>Parts</span></li>
        <li class="row l4"><svg><use href="#eye"/></svg><svg><use href="#asm"/><use href="#link"/></svg><span>Link(Assembly)</span></li>
        <li class="row l5"><svg><use href="#eye"/></svg><svg><use href="#cons"/><use href="#link"/></svg><span>Constraints</span></li>
        <li class="row l5"><svg><use href="#eye"/></svg><svg><use href="#elem"/><use href="#link"/></svg><span>Elements</span></li>
        <li class="row l5"><svg><use href="#eye"/></svg><svg><use href="#parts"/><use href="#link"/></svg><span>Parts</span></li>
        <li class="row l4 fill"><svg><use href="#eye"/></svg><svg><use href="#body"/><use href="#green-arrow"/></svg><span>Link001(Connecting_Plate)</span></li>
        <li class="row l5 fill selected" aria-selected="true"><svg><use href="#eye"/></svg><svg><use href="#body"/><use href="#link"/></svg><span>Link001_i0</span></li>
        <li class="row l6"><svg><use href="#eye-off"/></svg><svg viewBox="0 0 13 13"><path d="M6 8V2M6 8l-5 4" stroke="#7a1f28" stroke-width="1.600"/><path d="M6 8l6-2" stroke="#2c7c3c" stroke-width="1.600"/><path d="M10 8.500l2 2-2 2" fill="none" stroke="#fff" stroke-width="1.300"/></svg><span>Origin</span></li>
        <li class="row l6 fill"><svg><use href="#eye-off"/></svg><svg viewBox="0 0 20 20"><use href="#surface" fill="#6fdc1c" stroke="#1c4d00"/><circle cx="17" cy="2.500" r="2" fill="#d11"/></svg><svg viewBox="0 0 13 13"><path d="M1 1h11v11H1z" fill="#dcdcdc"/><path d="M2 2q4 2 9 0-2 4 0 8l-4-1-1 3q-1-4-4-5z" fill="#58c41c" stroke="#235a00" stroke-width=".7"/></svg><span>Import(*Binder(Pad)...</span></li>
        <li class="row l6"><svg><use href="#eye-off"/></svg><svg viewBox="0 0 13 13"><path d="M1 4l5-3 6 2v4L7 10 1 8z" fill="#f2de2b" stroke="#3b3400" stroke-width=".8"/><path d="M1 4l6 2 5-3" fill="none" stroke="#3b3400" stroke-width=".6"/><path d="M2 11h6M10 8.500l2 2-2 2" fill="none" stroke="#fff" stroke-width="1.300"/></svg><span>Pad</span></li>
        <li class="row l6 fill current"><svg><use href="#eye"/></svg><svg viewBox="0 0 13 13"><path d="M1 8l4-6 6 1-3 8z" fill="#d5202b"/><path d="M1 8l1 3 6 1 1-2z" fill="#2e5fa5"/><path d="M10 8.500l2 2-2 2" fill="none" stroke="#fff" stroke-width="1.300"/></svg><svg viewBox="0 0 13 13"><path d="M1 2l4-1 7 7-4 4-7-7z" fill="#42bd4a" stroke="#e7f3e7"/><circle cx="3.500" cy="3.500" r="1" fill="#fff"/></svg><span>Chamfer</span></li>
        <li class="row l5"><svg><use href="#eye"/></svg><svg><use href="#body"/><use href="#link"/></svg><span>Link001_i1</span></li>
        <li class="row l4"><svg><use href="#eye"/></svg><svg><use href="#screw"/><use href="#green-arrow"/></svg><span>M6x10-Screw001</span></li>
        <li class="row l5"><svg><use href="#eye-off"/></svg><svg><use href="#screw"/></svg><span>M6x10-Screw</span></li>
        <li class="row l4"><svg><use href="#eye"/></svg><svg><use href="#screw"/><use href="#green-arrow"/></svg><span>Link003(M6x10-Screw)</span></li>
        <li class="row l2"><svg><use href="#eye"/></svg><svg><use href="#asm"/><use href="#link"/></svg><span>Link004(Assembly)</span></li>
      </ul>
      <svg class="guides" viewBox="0 103 256 499" aria-hidden="true">
        <path d="M7 127v11h7M20 150v440h6M20 162h6M32 174v60h7M32 186h7M32 210h7M45 246v320h6M45 257h6M45 352h6M45 518h6M57 269v59h7M57 281h7M57 305h7M57 364v131h7M57 376h7M70 388v83h6M70 400h6M70 423h6M70 447h6M58 530v12h6" fill="none" stroke="#55555a"/>
        <path d="M4 137l3 4 3-4M17 160l3 4 3-4M29 232l3 4 3-4M42 256l3 4 3-4M42 350l3 4 3-4M54 374l3 4 3-4M42 517l3 4 3-4M31 182l3 4-3 4M31 206l3 4-3 4M56 277l3 4-3 4M56 301l3 4-3 4M56 324l3 4-3 4M69 396l3 4-3 4M69 443l3 4-3 4M56 491l3 4-3 4M44 562l3 4-3 4M19 586l3 4-3 4" fill="none" stroke="#323236" stroke-width="2.600"/>
      </svg>
      <div class="hscroll">
        <svg viewBox="0 0 8 10" aria-hidden="true"><path d="M6.500 1L3 5l3.500 4" fill="none" stroke="#eee" stroke-width="3"/><path d="M6.500 1L3 5l3.500 4" fill="none" stroke="#222" stroke-width="1.500"/></svg>
        <span class="thumb"></span>
        <svg viewBox="0 0 8 10" aria-hidden="true"><path d="M1.500 1L5 5 1.500 9" fill="none" stroke="#eee" stroke-width="3"/><path d="M1.500 1L5 5 1.500 9" fill="none" stroke="#222" stroke-width="1.500"/></svg>
      </div>
    </aside>
  </main>

  <footer class="tabs">
    <div class="tab"><button class="name"><svg><use href="#appico"/></svg>Component1 : 1*</button><button class="close" aria-label="Close">×</button></div>
    <div class="tab"><button class="name"><svg><use href="#appico"/></svg>Component2 : 1*</button><button class="close" aria-label="Close">×</button></div>
    <div class="tab"><button class="name"><svg><use href="#appico"/></svg>Component3 : 1*</button><button class="close" aria-label="Close">×</button></div>
    <div class="tab"><button class="name"><svg><use href="#appico"/></svg>AssemblyOfComponents : 1*</button><button class="close" aria-label="Close">×</button></div>
    <div class="tab"><button class="name"><svg><use href="#appico"/></svg>Connecting_Plate : 1*</button><button class="close" aria-label="Close">×</button></div>
    <div class="tab active"><button class="name"><svg><use href="#appico"/></svg>Final_Product : 1*</button><button class="close" aria-label="Close">×</button></div>
  </footer>

  <svg class="banner" viewBox="826 0 374 374" role="img" aria-label="Tutorial">
    <path d="M826 0H1200V374z" fill="#ff8f00"/>
    <text transform="translate(905 40) rotate(45)">TUTORIAL</text>
  </svg>
</div>
</body>
</html>
```
FILE: styles.css
```css
* { box-sizing: border-box; }
body {
  margin: 0;
  background: #696969;
  color: #f4f4f4;
  font: 13px/16px Inter, Roboto, sans-serif;
  font-feature-settings: "calt" 0;
}
button, select {
  margin: 0;
  padding: 0;
  border: 0;
  background: none;
  color: inherit;
  font: inherit;
  font-feature-settings: inherit;
}
.defs { position: absolute; }
.app {
  position: relative;
  display: flex;
  flex-direction: column;
  min-height: 100vh;
}

/* Menu and toolbars */
.chrome { background: #696969; padding-bottom: 4px; }
.menubar { display: flex; align-items: center; gap: 12px; height: 22px; font-size: 12px; }
.menubar button { font-weight: 500; white-space: nowrap; }
.menu-glyphs { width: 82px; height: 22px; margin-right: -12px; }
.cloud { width: 36px; height: 22px; margin-left: 236px; }

.toolbar { display: flex; align-items: center; height: 30px; padding-left: 4px; }
.toolbar.tall { height: 34px; }
.group { display: grid; grid-auto-flow: column; grid-auto-columns: 1fr; justify-items: center; flex: none; }
.w24 { width: 24px; }
.w28 { width: 28px; }
.w56 { width: 56px; }
.w109 { width: 109px; }
.w118 { width: 118px; }
.w137 { width: 137px; }
.w143 { width: 143px; }
.w148 { width: 148px; }
.w166 { width: 166px; }
.w193 { width: 193px; }
.w195 { width: 195px; }
.group button { position: relative; width: 20px; height: 20px; }
.group svg { display: block; width: 20px; height: 20px; fill: none; }
.more::before {
  content: "";
  position: absolute;
  left: -4px;
  bottom: -2px;
  border: 2px solid transparent;
  border-left-color: #ddd;
  border-bottom-color: #ddd;
}
.handle {
  flex: none;
  width: 4px;
  height: 24px;
  margin: 0 1px;
  background: repeating-linear-gradient(#505050 0 1px, transparent 1px 2px);
}
.handle.gap { margin-left: 6px; }
.divider { flex: none; width: 1px; height: 24px; margin: 0 2px 0 3px; background: #5e5e5e; }

.workbench {
  display: grid;
  grid-template-columns: 13px 1fr 13px;
  align-items: center;
  width: 145px;
  height: 20px;
  background: #525252;
  flex: none;
}
.workbench > svg { width: 13px; height: 13px; }
.workbench .caret { height: 20px; background: #494949; }
.workbench select { appearance: none; padding-left: 3px; color: #b9b9b9; height: 20px; font-size: 12px; }

/* 3D view */
.viewport {
  position: relative;
  flex: 1;
  display: flex;
  min-height: 560px;
  background: linear-gradient(#6c6c6c, #747475 22%, #8a8a90 50%, #b1b1d0);
}
.scene { position: absolute; inset: 0; width: 100%; height: 100%; }
.axis text { font: 8px Roboto, sans-serif; fill: #1c1c22; }

/* Model tree */
.panel {
  position: relative;
  display: flex;
  flex-direction: column;
  width: 256px;
  padding-top: 13px;
}
.tree {
  position: relative;
  z-index: 1;
  display: grid;
  grid-auto-rows: 1fr;
  justify-items: start;
  height: 499px;
  margin: 0;
  padding: 0;
  list-style: none;
}
.guides { position: absolute; top: 13px; left: 0; width: 256px; height: 499px; }
.row {
  display: flex;
  align-items: center;
  padding: 0 10px 0 1px;
  background: rgba(64, 64, 64, .72);
  color: #fff;
  font-weight: 500;
  white-space: nowrap;
  text-shadow: 1px 1px 1px #222;
}
.row svg { flex: none; width: 13px; height: 13px; }
.row span { margin-left: 3px; }
.l0 { margin-left: 1px; padding-right: 29px; }
.l1 { margin-left: 14px; }
.l2 { margin-left: 26px; }
.l3 { margin-left: 39px; }
.l4 { margin-left: 51px; }
.l5 { margin-left: 63px; }
.l6 { margin-left: 76px; }
.doc { padding-right: 17px; font-weight: 700; }
.fill { justify-self: stretch; padding-right: 0; }
.selected { background: #55a8fe; border-bottom: 1px solid #23415f; font-weight: 700; text-shadow: none; }
.current { background: #4a4a4b; }

.hscroll { display: flex; align-items: center; gap: 1px; height: 12px; margin-top: auto; }
.hscroll svg { width: 8px; height: 10px; }
.thumb { flex: 1; height: 6px; margin-right: 8px; border-radius: 3px; background: #303237; }

/* Document tabs */
.tabs { display: flex; height: 25px; background: #6b6b6b; color: #343434; border-top: 1px solid #777; font-size: 12px; }
.tab { display: flex; align-items: center; border-bottom: 3px solid transparent; padding: 0 6px 0 2px; }
.tab .name { display: flex; align-items: center; gap: 5px; white-space: nowrap; }
.tab svg { width: 13px; height: 13px; }
.tab .close { width: 9px; margin-left: 10px; font-size: 15px; }
.tab.active { padding-right: 4px; background: #717171; color: #e9e9e9; border-bottom-color: #4b86ee; }
.tab.active .close { color: #343434; }

/* Corner ribbon */
.banner { position: absolute; z-index: 2; top: 0; right: 0; width: 374px; height: 374px; overflow: visible; pointer-events: none; }
.banner text { font: 700 77px "Open Sans", sans-serif; fill: #fff; stroke: #8a8a8a; stroke-width: 1px; paint-order: stroke; }
```
